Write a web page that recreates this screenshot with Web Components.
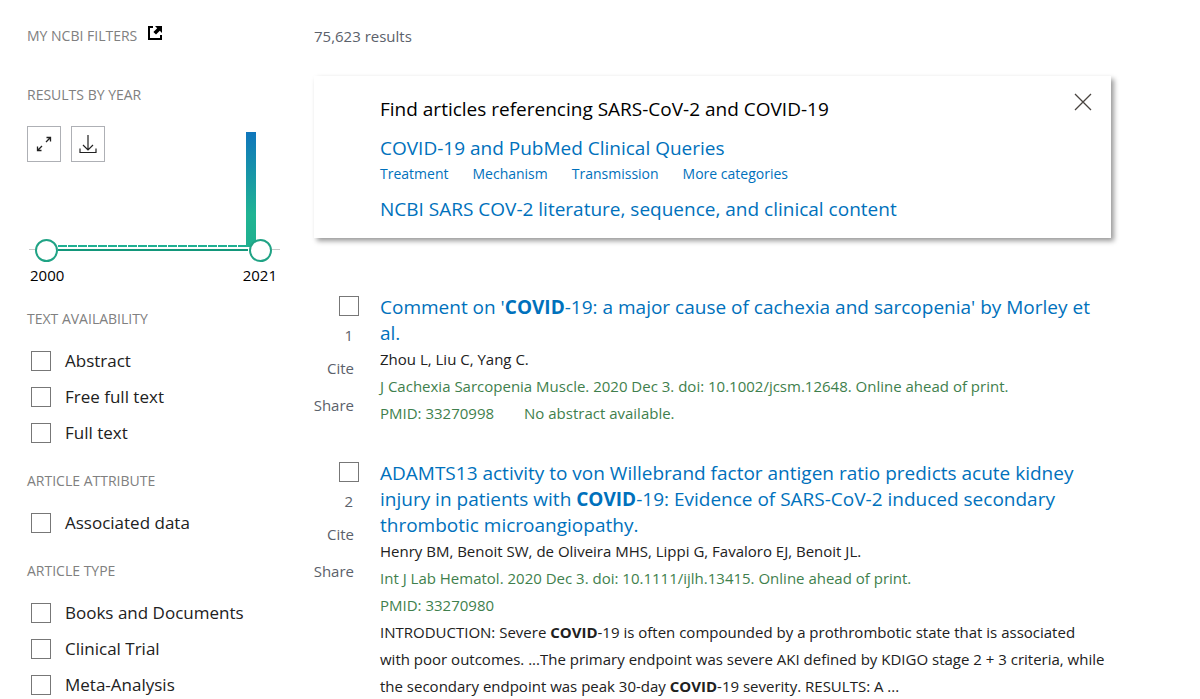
<!DOCTYPE html>
<html lang="en">
<head>
<meta charset="utf-8">
<meta name="viewport" content="width=device-width, initial-scale=1">
<title>COVID-19 - Search Results</title>
<style>
    body {
        margin: 0;
        background: #fff;
        color: #212121;
        font: 15px/24px 'Segoe UI', 'Open Sans', 'Noto Sans', sans-serif;
        --link: #0071bc;
        --green: #3f7f4d;
        --muted: #5b616b;
        --teal: #20a385;
    }
</style>
</head>
<body>
<search-page>
    <filter-sidebar slot="sidebar">
        <year-chart from="2000" to="2021"></year-chart>
        <filter-group heading="TEXT AVAILABILITY" options="Abstract|Free full text|Full text"></filter-group>
        <filter-group heading="ARTICLE ATTRIBUTE" options="Associated data"></filter-group>
        <filter-group heading="ARTICLE TYPE" options="Books and Documents|Clinical Trial|Meta-Analysis"></filter-group>
    </filter-sidebar>

    <result-count>75,623 results</result-count>

    <promo-card>
        <span slot="heading">Find articles referencing SARS-CoV-2 and COVID-19</span>
    </promo-card>

    <article-result number="1">
        <span slot="title">Comment on '<b>COVID</b>-19: a major cause of cachexia and sarcopenia' by Morley et al.</span>
        <span slot="authors">Zhou L, Liu C, Yang C.</span>
        <span slot="citation">J Cachexia Sarcopenia Muscle. 2020 Dec 3. doi: 10.1002/jcsm.12648. Online ahead of print.</span>
        <span slot="pmid">PMID: 33270998</span>
        <span slot="pmid">No abstract available.</span>
    </article-result>

    <article-result number="2">
        <span slot="title">ADAMTS13 activity to von Willebrand factor antigen ratio predicts acute kidney injury in patients with <b>COVID</b>-19: Evidence of SARS-CoV-2 induced secondary thrombotic microangiopathy.</span>
        <span slot="authors">Henry BM, Benoit SW, de Oliveira MHS, Lippi G, Favaloro EJ, Benoit JL.</span>
        <span slot="citation">Int J Lab Hematol. 2020 Dec 3. doi: 10.1111/ijlh.13415. Online ahead of print.</span>
        <span slot="pmid">PMID: 33270980</span>
        <span slot="snippet">INTRODUCTION: Severe <b>COVID</b>-19 is often compounded by a prothrombotic state that is associated with poor outcomes. ...The primary endpoint was severe AKI defined by KDIGO stage 2 + 3 criteria, while the secondary endpoint was peak 30-day <b>COVID</b>-19 severity. RESULTS: A ...</span>
    </article-result>
</search-page>

<script>
const checkboxStyle = `
    input[type=checkbox] {
        appearance: none;
        flex: none;
        box-sizing: border-box;
        width: 20px;
        height: 20px;
        margin: 0;
        border: 1px solid #777;
        background: #fff;
    }
    input[type=checkbox]:checked {
        background: var(--link);
    }
`;

// Two column page: filters on the left, results on the right
class SearchPage extends HTMLElement {
    constructor() {
        super();
        this.attachShadow({ mode: 'open' }).innerHTML = `
            <style>
                :host {
                    display: grid;
                    grid-template-columns: 253px minmax(0, 1fr);
                    column-gap: 34px;
                    padding: 24px 89px 24px 27px;
                }
            </style>
            <slot name="sidebar"></slot>
            <main><slot></slot></main>
        `;
    }
}

class FilterSidebar extends HTMLElement {
    constructor() {
        super();
        this.attachShadow({ mode: 'open' }).innerHTML = `
            <style>
                :host {
                    display: block;
                }
                h3 {
                    display: flex;
                    gap: 10px;
                    margin: 0 0 35px;
                    font-size: 14px;
                    font-weight: 400;
                    color: #808080;
                }
                a {
                    line-height: 0;
                    padding-top: 2px;
                    color: #000;
                }
            </style>
            <h3>MY NCBI FILTERS
                <a href="#filters" aria-label="Open My NCBI filters">
                    <svg width="16" height="15" viewBox="0 0 16 15" fill="none" stroke="currentColor" stroke-width="2">
                        <path d="M6 1H2v12h12V9"/>
                        <path d="M8 0h7v7l-2.200-2.200L9 8.600 6.400 6l3.800-3.800z" fill="currentColor" stroke="none"/>
                    </svg>
                </a>
            </h3>
            <slot></slot>
        `;
    }
}

class YearChart extends HTMLElement {
    constructor() {
        super();
        this.attachShadow({ mode: 'open' });
    }

    connectedCallback() {
        const from = this.getAttribute('from');
        const to = this.getAttribute('to');

        this.shadowRoot.innerHTML = `
            <style>
                :host {
                    display: block;
                    padding-bottom: 2px;
                }
                h3 {
                    margin: 0 0 18px;
                    font-size: 14px;
                    font-weight: 400;
                    color: #808080;
                }
                .chart {
                    display: grid;
                }
                .chart > * {
                    grid-area: 1 / 1;
                }
                .histogram {
                    display: block;
                    width: 253px;
                    height: 137px;
                }
                .tools {
                    display: flex;
                    gap: 10px;
                    align-self: start;
                    justify-self: start;
                    padding-top: 1px;
                }
                button {
                    display: grid;
                    place-items: center;
                    box-sizing: border-box;
                    width: 34px;
                    height: 36px;
                    padding: 0;
                    border: 1px solid #aeb0b5;
                    background: #fff;
                    color: #212121;
                }
                input {
                    appearance: none;
                    align-self: end;
                    width: 237px;
                    height: 23px;
                    margin: 0 8px;
                    background: none;
                    pointer-events: none;
                }
                input::-webkit-slider-thumb {
                    appearance: none;
                    box-sizing: border-box;
                    width: 23px;
                    height: 23px;
                    border: 2px solid var(--teal);
                    border-radius: 50%;
                    background: #fff;
                    pointer-events: auto;
                }
                .years {
                    display: flex;
                    justify-content: space-between;
                    padding: 1px 3px 0;
                    font-size: 15px;
                    color: #000;
                }
            </style>
            <h3>RESULTS BY YEAR</h3>
            <div class="chart">
                <svg class="histogram" viewBox="0 0 253 137" aria-hidden="true">
                    <defs>
                        <linearGradient id="bar" x1="0" y1="0" x2="0" y2="1">
                            <stop offset="0" stop-color="#0f76bc"/>
                            <stop offset=".72" stop-color="#20b493"/>
                            <stop offset="1" stop-color="#20b08f"/>
                        </linearGradient>
                    </defs>
                    <rect x="219" y="7" width="10" height="115" fill="url(#bar)"/>
                    <path d="M31 121h189" stroke="#20b093" stroke-width="2" stroke-dasharray="9 1"/>
                    <path d="M2 124.500h7M245 124.500h8" stroke="#c8c8c8"/>
                    <path d="M31 125h190" stroke="#12977a" stroke-width="2"/>
                </svg>
                <div class="tools">
                    <button aria-label="Expand chart">
                        <svg width="16" height="16" viewBox="0 0 16 16" fill="none" stroke="currentColor" stroke-width="1.300">
                            <path d="M10.500 1.500h4v4M14.500 1.500l-4.500 4.500M1.500 10.500v4h4M1.500 14.500l4.500-4.500"/>
                        </svg>
                    </button>
                    <button aria-label="Download results by year">
                        <svg width="18" height="20" viewBox="0 0 18 20" fill="none" stroke="currentColor" stroke-width="1.200">
                            <path d="M9 1v15M4 11l5 5 5-5M1 14.500v4h16v-4"/>
                        </svg>
                    </button>
                </div>
                <input type="range" min="${from}" max="${to}" value="${from}" aria-label="Start year">
                <input type="range" min="${from}" max="${to}" value="${to}" aria-label="End year">
            </div>
            <div class="years"><span>${from}</span><span>${to}</span></div>
        `;
    }
}

class FilterGroup extends HTMLElement {
    constructor() {
        super();
        this.attachShadow({ mode: 'open' });
    }

    connectedCallback() {
        const options = this.getAttribute('options').split('|');

        this.shadowRoot.innerHTML = `
            <style>
                ${checkboxStyle}
                :host {
                    display: block;
                    margin-top: 18px;
                }
                h3 {
                    margin: 0 0 12px;
                    font-size: 14px;
                    font-weight: 400;
                    color: #808080;
                }
                ul {
                    margin: 0;
                    padding: 0 0 0 4px;
                    list-style: none;
                }
                label {
                    display: flex;
                    align-items: center;
                    gap: 14px;
                    height: 36px;
                    font-size: 17px;
                }
            </style>
            <h3>${this.getAttribute('heading')}</h3>
            <ul>${options.map(o => `<li><label><input type="checkbox">${o}</label></li>`).join('')}</ul>
        `;
    }
}

class ResultCount extends HTMLElement {
    constructor() {
        super();
        this.attachShadow({ mode: 'open' }).innerHTML = `
            <style>
                :host {
                    display: block;
                    font-size: 15px;
                    color: var(--muted);
                }
            </style>
            <slot></slot>
        `;
    }
}

class PromoCard extends HTMLElement {
    constructor() {
        super();
        this.attachShadow({ mode: 'open' }).innerHTML = `
            <style>
                :host {
                    display: flex;
                    justify-content: space-between;
                    align-items: flex-start;
                    margin: 28px 0 56px;
                    padding: 17px 19px 16px 66px;
                    background: #fff;
                    box-shadow: 3px 3px 5px rgba(0, 0, 0, 0.4);
                }
                h2, p {
                    margin: 0;
                    font-size: 19px;
                    font-weight: 400;
                    line-height: 26px;
                }
                h2 {
                    margin-bottom: 13px;
                    padding-top: 3px;
                    color: #000;
                }
                nav {
                    display: flex;
                    gap: 24px;
                    margin-bottom: 9px;
                    font-size: 14px;
                    line-height: 26px;
                }
                a {
                    color: var(--link);
                    text-decoration: none;
                }
                button {
                    display: flex;
                    padding: 0;
                    border: 0;
                    background: none;
                    color: #494440;
                }
            </style>
            <div>
                <h2><slot name="heading"></slot></h2>
                <p><a href="#queries">COVID-19 and PubMed Clinical Queries</a></p>
                <nav>
                    <a href="#treatment">Treatment</a>
                    <a href="#mechanism">Mechanism</a>
                    <a href="#transmission">Transmission</a>
                    <a href="#more">More categories</a>
                </nav>
                <p><a href="#literature">NCBI SARS COV-2 literature, sequence, and clinical content</a></p>
            </div>
            <button aria-label="Close">
                <svg width="18" height="18" viewBox="0 0 18 18" fill="none" stroke="currentColor" stroke-width="1.300">
                    <path d="M1 1l16 16M17 1L1 17"/>
                </svg>
            </button>
        `;
    }
}

class ArticleResult extends HTMLElement {
    constructor() {
        super();
        this.attachShadow({ mode: 'open' });
    }

    connectedCallback() {
        const number = this.getAttribute('number');

        this.shadowRoot.innerHTML = `
            <style>
                ${checkboxStyle}
                :host {
                    display: grid;
                    grid-template-columns: 45px minmax(0, 1fr);
                    column-gap: 21px;
                    margin-bottom: 33px;
                    padding-right: 4px;
                }
                .actions {
                    display: flex;
                    flex-direction: column;
                    align-items: flex-end;
                    padding-top: 2px;
                    color: var(--muted);
                }
                label {
                    display: flex;
                    flex-direction: column;
                    align-items: flex-end;
                    gap: 7px;
                    margin-bottom: 9px;
                }
                label span {
                    padding-right: 6px;
                }
                button {
                    padding: 0 5px 0 0;
                    border: 0;
                    background: none;
                    color: inherit;
                    font: inherit;
                }
                button + button {
                    margin-top: 13px;
                }
                h2 {
                    margin: 0;
                    font-size: 19px;
                    font-weight: 400;
                    line-height: 26px;
                }
                h2 a {
                    color: var(--link);
                    text-decoration: none;
                }
                .line {
                    line-height: 27px;
                }
                .green {
                    display: flex;
                    gap: 30px;
                    color: var(--green);
                }
            </style>
            <div class="actions">
                <label><input type="checkbox"><span>${number}</span></label>
                <button>Cite</button>
                <button>Share</button>
            </div>
            <article>
                <h2><a href="#article-${number}"><slot name="title"></slot></a></h2>
                <div class="line"><slot name="authors"></slot></div>
                <div class="line green"><slot name="citation"></slot></div>
                <div class="line green"><slot name="pmid"></slot></div>
                <div class="line"><slot name="snippet"></slot></div>
            </article>
        `;
    }
}

customElements.define('search-page', SearchPage);
customElements.define('filter-sidebar', FilterSidebar);
customElements.define('year-chart', YearChart);
customElements.define('filter-group', FilterGroup);
customElements.define('result-count', ResultCount);
customElements.define('promo-card', PromoCard);
customElements.define('article-result', ArticleResult);
</script>
</body>
</html>
